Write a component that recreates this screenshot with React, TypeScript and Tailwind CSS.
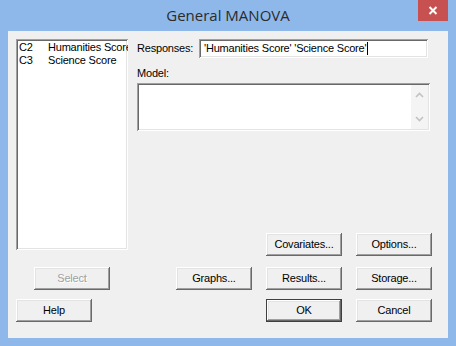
import type { ReactNode } from 'react'
import clsx from 'clsx'

const raised =
  'shadow-[inset_-1px_-1px_#696969,inset_1px_1px_#ffffff,inset_-2px_-2px_#a0a0a0,inset_2px_2px_#e3e3e3]'
const sunken =
  'shadow-[inset_1px_1px_#a0a0a0,inset_-1px_-1px_#ffffff,inset_2px_2px_#696969,inset_-2px_-2px_#e3e3e3]'

function Btn({
  children,
  disabled,
  isDefault,
  className,
}: {
  children: ReactNode
  disabled?: boolean
  isDefault?: boolean
  className?: string
}) {
  return (
    <button
      className={clsx(
        'flex h-[23px] w-[76px] shrink-0 items-center justify-center bg-[#f0f0f0] text-[11px] leading-none',
        isDefault ? 'border border-[#3f3f3f]' : '',
        disabled ? 'text-[#a0a0a0] [text-shadow:1px_1px_#ffffff]' : 'text-black',
        className,
      )}
    >
      <span className={clsx('flex h-full w-full items-center justify-center', raised)}>{children}</span>
    </button>
  )
}

function Chevron({ up }: { up?: boolean }) {
  return (
    <svg width="9" height="6" viewBox="0 0 9 6" className="block">
      <path
        d={up ? 'M1 5 L4.5 1.5 L8 5' : 'M1 1 L4.5 4.5 L8 1'}
        fill="none"
        stroke="#c2c2c2"
        strokeWidth="1.6"
      />
    </svg>
  )
}

export default function App() {
  return (
    <div
      className="flex h-[346px] w-[456px] flex-col bg-[#8fb8ea] px-[8px] pb-[8px]"
      style={{ fontFamily: '"Liberation Sans", Arial, sans-serif' }}
    >
      {/* title bar */}
      <div className="relative -mx-[8px] flex h-[31px] shrink-0 items-center justify-center">
        <span
          className="text-[15px] text-[#2b2b2b]"
          style={{ fontFamily: '"Open Sans", "Noto Sans", sans-serif' }}
        >
          General MANOVA
        </span>
        <div className="absolute right-[8px] top-0 flex h-[21px] w-[30px] items-center justify-center bg-[#c75050]">
          <svg width="10" height="9" viewBox="0 0 10 9">
            <path d="M1.5 1 L8.5 8 M8.5 1 L1.5 8" stroke="#ffffff" strokeWidth="2" />
          </svg>
        </div>
      </div>

      {/* client area */}
      <div className="flex flex-1 bg-[#f0f0f0] pl-[8px] pt-[8px] text-[11px] tracking-[-0.2px] text-black">
        {/* left column */}
        <div className="flex w-[112px] flex-col">
          <div className={clsx('h-[211px] w-[112px] overflow-hidden bg-white pl-[3px] pt-[2px]', sunken)}>
            {[
              ['C2', 'Humanities Score'],
              ['C3', 'Science Score'],
            ].map(([c, name]) => (
              <div key={c} className="flex h-[13px] items-center whitespace-nowrap">
                <span className="w-[29px] shrink-0">{c}</span>
                <span>{name}</span>
              </div>
            ))}
          </div>
          <Btn disabled className="ml-[18px] mt-[17px]">
            Select
          </Btn>
          <Btn className="mt-[9px]">Help</Btn>
        </div>

        {/* right column */}
        <div className="ml-[9px] flex w-[295px] flex-col">
          <div className="flex h-[19px] items-center">
            <span className="w-[62px] shrink-0">Responses:</span>
            <div className={clsx('flex h-[19px] w-[229px] items-center bg-white pl-[5px]', sunken)}>
              <span className="whitespace-nowrap">'Humanities Score' 'Science Score'</span>
              <span className="ml-px h-[13px] w-px bg-black" />
            </div>
          </div>
          <div className="mt-[9px] flex h-[13px] items-center">Model:</div>
          <div className={clsx('mt-[3px] flex h-[48px] w-[293px] bg-white p-[2px]', sunken)}>
            <div className="flex-1" />
            <div className="flex w-[17px] flex-col items-center justify-between bg-[#f4f4f4] py-[7px]">
              <Chevron up />
              <Chevron />
            </div>
          </div>

          <div className="mt-[102px] flex justify-end gap-[14px]">
            <Btn>Covariates...</Btn>
            <Btn>Options...</Btn>
          </div>
          <div className="mt-[11px] flex justify-end gap-[14px]">
            <Btn>Graphs...</Btn>
            <Btn>Results...</Btn>
            <Btn>Storage...</Btn>
          </div>
          <div className="mt-[9px] flex justify-end gap-[14px]">
            <Btn isDefault>OK</Btn>
            <Btn>Cancel</Btn>
          </div>
        </div>
      </div>
    </div>
  )
}
